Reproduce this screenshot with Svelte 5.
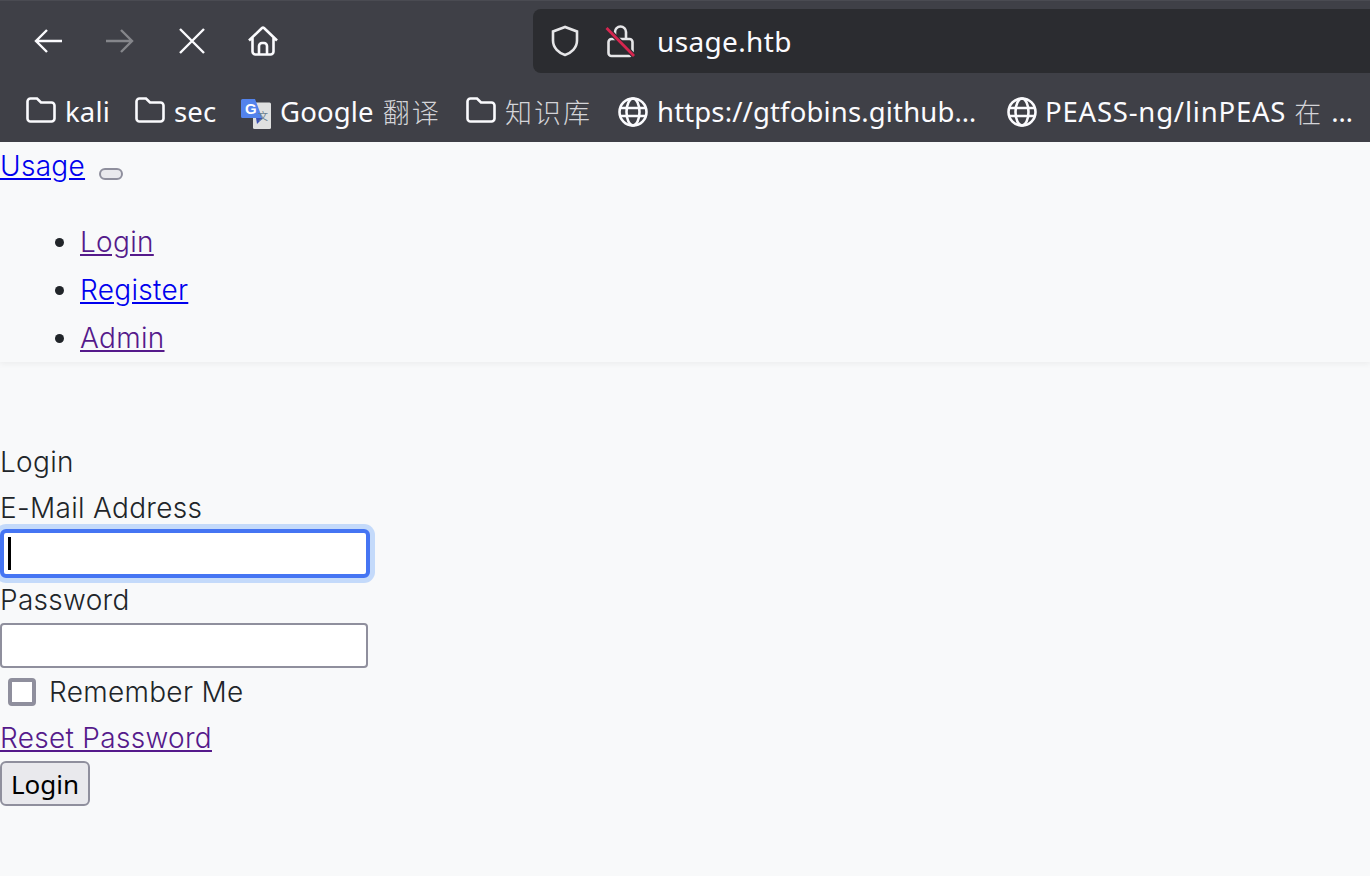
<script>
  const bookmarks = [
    { icon: 'folder', label: 'kali', cls: 'b1' },
    { icon: 'folder', label: 'sec', cls: 'b2' },
    { icon: 'google', label: 'Google', cjk: '翻译', cls: 'b3' },
    { icon: 'folder', cjk: '知识库', cls: 'b4' },
    { icon: 'globe', label: 'https://gtfobins.github…', cls: 'b5' },
    { icon: 'globe', label: 'PEASS-ng/linPEAS', cjk: '在', tail: '…', cls: 'b6' }
  ];
</script>

<div class="browser">
  <header class="chrome">
    <div class="toolbar">
      <nav class="navbtns">
        <svg class="ic" viewBox="0 0 28 28"><path d="M28 14H2M13 3 2 14l11 11" /></svg>
        <svg class="ic dim" viewBox="0 0 28 28"><path d="M0 14h26M15 3l11 11-11 11" /></svg>
        <svg class="ic" viewBox="0 0 28 28"><path d="M2 2l24 24M26 2 2 26" /></svg>
        <svg class="ic home" viewBox="0 0 30 30"><path d="M1 14.500 14 2a1.500 1.500 0 0 1 2 0l13 12.500M4.500 11.500V25.500a3 3 0 0 0 3 3h15a3 3 0 0 0 3-3V11.500M11 28.500V20a3 3 0 0 1 3-3h2a3 3 0 0 1 3 3v8.500" /></svg>
      </nav>
      <div class="urlbar">
        <svg class="shield" viewBox="0 0 30 32"><path d="M15 2 3 6.500v9C3 23 9 28 15 30c6-2 12-7 12-14.500v-9z" /></svg>
        <svg class="lock" viewBox="0 0 30 32">
          <path class="lk" d="M3.500 17a3 3 0 0 1 3-3h18a3 3 0 0 1 3 3v11a3 3 0 0 1-3 3h-18a3 3 0 0 1-3-3zM10 14V7a5.500 5.500 0 0 1 11 0v7" />
          <path class="mask" d="M1.500 3 29 31" />
          <path class="slash" d="M1.500 3 29 31" />
        </svg>
        <span class="url">usage.htb</span>
      </div>
    </div>
    <div class="bookmarks">
      {#each bookmarks as b}
        <div class="bm {b.cls}">
          {#if b.icon === 'folder'}
            <svg class="bi folder" viewBox="0 0 30 26"><path d="M1.500 4.500a3 3 0 0 1 3-3h6.500l4 4h10.500a3 3 0 0 1 3 3v13a3 3 0 0 1-3 3h-21a3 3 0 0 1-3-3z" /></svg>
          {:else if b.icon === 'globe'}
            <svg class="bi" viewBox="0 0 30 30"><circle cx="15" cy="15" r="13.500" /><ellipse cx="15" cy="15" rx="6.500" ry="13.500" /><path d="M2 11h26M2 19h26" /></svg>
          {:else}
            <svg class="bi g" viewBox="0 0 30 30">
              <rect x="12" y="3.500" width="18" height="26.500" rx="1.500" fill="#dfe0e0" />
              <path d="M15 19h7l-6 6z" fill="#3a4fb5" />
              <path d="M1.500 0H14l8 21-1 -2H1.500A1.500 1.500 0 0 1 0 17.500V1.500A1.500 1.500 0 0 1 1.500 0z" fill="#5383ec" />
              <text x="4" y="15" class="gl">G</text>
              <text x="17" y="21" class="gt">文</text>
            </svg>
          {/if}
          {#if b.label}<span>{b.label}</span>{/if}
          {#if b.cjk}<span class="cjk">{b.cjk}</span>{/if}
          {#if b.tail}<span>{b.tail}</span>{/if}
        </div>
      {/each}
    </div>
  </header>

  <main class="page">
    <div class="topnav">
      <div class="brandline">
        <a href="#u" class="unvisited">Usage</a>
        <button class="toggler" aria-label="toggle"></button>
      </div>
      <ul>
        <li><a href="#l" class="visited">Login</a></li>
        <li><a href="#r" class="unvisited">Register</a></li>
        <li><a href="#a" class="visited">Admin</a></li>
      </ul>
    </div>

    <form class="form">
      <div>Login</div>
      <div>E-Mail Address</div>
      <div class="field"><div class="input focus"><i class="caret"></i></div></div>
      <div>Password</div>
      <div class="field"><div class="input"></div></div>
      <div class="remember"><span class="check"></span><span>Remember Me</span></div>
      <div><a href="#p" class="visited">Reset Password</a></div>
      <div class="field"><button class="submit" type="button">Login</button></div>
    </form>
  </main>
</div>

<style>
  :global(body) { margin: 0; background: #f8f9fa; }
  .browser { width: 1370px; height: 876px; overflow: hidden; display: flex; flex-direction: column; }
  .chrome { height: 142px; background: #3f4047; color: #fbfbfe; font-family: "Noto Sans", sans-serif; flex: none; box-sizing: border-box; border-top: 1px solid #4a4b52; }
  .toolbar { display: flex; height: 81px; padding-top: 8px; box-sizing: border-box; }
  .navbtns { width: 533px; display: flex; align-items: center; padding: 0 0 0 34px; gap: 44px; box-sizing: border-box; height: 64px; }
  .ic { width: 28px; height: 28px; fill: none; stroke: #fbfbfe; stroke-width: 2.400; overflow: visible; }
  .ic.dim { stroke: #85868b; }
  .ic.home { width: 30px; height: 30px; margin: -1px 0 0 -2px; stroke-width: 2.600; }
  .urlbar { flex: 1; height: 64px; background: #2b2c30; border-radius: 8px 0 0 8px; display: flex; align-items: center; }
  .shield { width: 30px; height: 32px; margin-left: 17px; fill: none; stroke: #e6e6e8; stroke-width: 2.600; }
  .lock { width: 30px; height: 32px; margin-left: 25px; overflow: visible; fill: none; }
  .lk { stroke: #e6e6e8; stroke-width: 2.600; }
  .mask { stroke: #2b2c30; stroke-width: 5px; }
  .slash { stroke: #d6264f; stroke-width: 2.800; }
  .url { font-size: 28px; letter-spacing: .35px; margin-left: 22px; color: #fbfbfe; line-height: 40px; }
  .bookmarks { display: flex; height: 60px; padding-left: 26px; font-size: 27.500px; letter-spacing: .15px; }
  .bm { display: flex; align-items: center; gap: 9px; white-space: nowrap; height: 59px; flex: none; }
  .bi { width: 30px; height: 30px; fill: none; stroke: #fbfbfe; stroke-width: 2.600; flex: none; }
  .bi.folder { margin-bottom: 3px; }
  .bi.g { stroke: none; margin-top: 4px; }
  .gl { font: 700 15px "Liberation Sans", sans-serif; fill: #fff; letter-spacing: 0; }
  .gt { font: 10px "Noto Sans CJK SC", sans-serif; fill: #6b7f8f; letter-spacing: 0; }
  .cjk { font-family: "Noto Sans CJK SC", sans-serif; font-weight: 300; color: #d4d4d8; letter-spacing: 2px; font-size: 27px; }
  .b1 { width: 109px; }
  .b2 { width: 106px; }
  .b3 { width: 225px; }
  .b4 { width: 152px; }
  .b5 { width: 389px; }
  .b6 { letter-spacing: .8px; gap: 8px; }
  .page { flex: 1; background: #f8f9fa; color: #212529; font-family: Inter, sans-serif; font-weight: 300; font-size: 28px; letter-spacing: .3px; line-height: 46px; }
  .topnav { height: 220px; box-shadow: 0 2px 6px rgba(0,0,0,.05); }
  .brandline { height: 48px; line-height: 46px; display: flex; align-items: center; }
  .toggler { width: 24px; height: 12px; margin: 16px 0 0 14px; padding: 0; background: #e9e9ed; border: 2px solid #8f8f9d; border-radius: 6px; box-sizing: border-box; }
  ul { margin: 28px 0 0; padding: 0 0 0 80px; list-style: disc; }
  li { line-height: 48px; }
  .unvisited { color: #0000ee; }
  .visited { color: #551a8b; }
  .form { margin-top: 77px; }
  .field { height: 46px; display: flow-root; }
  .input { width: 368px; height: 45px; box-sizing: border-box; background: #fff; border: 2px solid #8f8f9d; border-radius: 4px; position: relative; }
  .input.focus { border: 4px solid #4575f3; box-shadow: 0 0 0 5px #c4dafa; height: 49px; width: 370px; margin-top: -2px; border-radius: 6px; }
  .caret { position: absolute; left: 4px; top: 4px; width: 3px; height: 33px; background: #000; }
  .remember { display: flex; align-items: center; gap: 13px; padding-left: 8px; }
  .check { width: 28px; height: 28px; box-sizing: border-box; background: #fff; border: 4px solid #8f8f9d; border-radius: 4px; }
  .submit { display: block; width: 90px; height: 45px; padding: 0; font: 26px "Noto Sans", sans-serif; letter-spacing: 0; color: #000; background: #e9e9ed; border: 2px solid #8f8f9d; border-radius: 6px; box-sizing: border-box; }
</style>
